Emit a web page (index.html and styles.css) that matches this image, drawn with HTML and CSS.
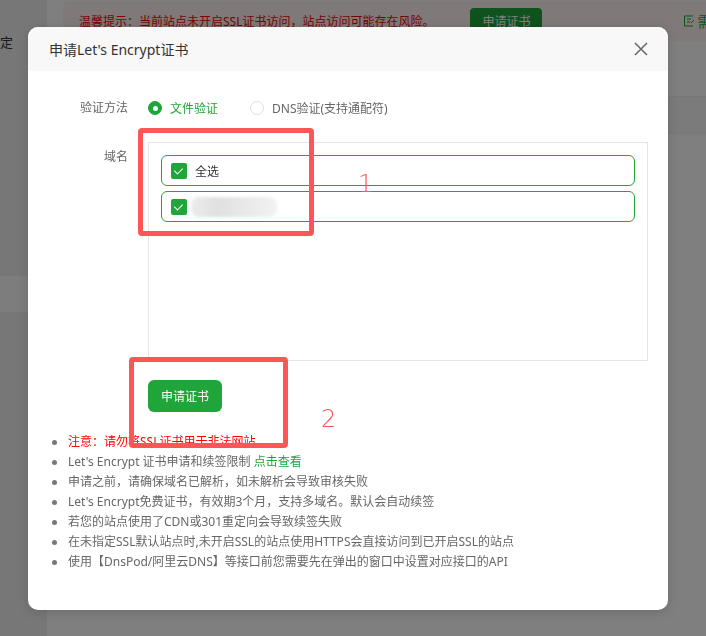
FILE: index.html
```html
<!DOCTYPE html>
<html lang="zh-CN">
<head>
  <meta charset="UTF-8" />
  <meta name="viewport" content="width=device-width,initial-scale=1.0"/>
  <title>申请Let's Encrypt证书</title>
  <link rel="stylesheet" href="styles.css">
</head>
<body>

<div class="app">
  <!-- page under the mask -->
  <aside class="sidebar">
    <div class="side-item">锁定</div>
    <div class="side-item side-active"></div>
  </aside>

  <main class="main">
    <div class="ssl-tip">
      <span class="tip-text">温馨提示：当前站点未开启SSL证书访问，站点访问可能存在风险。</span>
      <span class="tip-btn">申请证书</span>
      <span class="tip-link">
        <svg width="12" height="12" viewBox="0 0 12 12"><path d="M10 1H1.5v10H10M4 4h4M4 7h3M8 8l3-3" fill="none" stroke="currentColor" stroke-width="1"/></svg>需要
      </span>
    </div>
    <div class="tabs"></div>
    <div class="table-head"></div>
    <div class="table-row"></div>
  </main>
</div>

<div class="mask"></div>

<div class="modal">
  <div class="modal-header">
    <h3>申请Let's Encrypt证书</h3>
    <svg class="close" width="14" height="14" viewBox="0 0 14 14"><path d="M1 1l12 12M13 1L1 13" stroke="#666" stroke-width="1.5"/></svg>
  </div>

  <div class="modal-body">
    <div class="form-row">
      <label class="form-label">验证方法</label>
      <div class="form-control radios">
        <span class="radio checked"><i></i>文件验证</span>
        <span class="radio"><i></i>DNS验证(支持通配符)</span>
      </div>
    </div>

    <div class="form-row">
      <label class="form-label">域名</label>
      <div class="form-control">
        <div class="domain-box">
          <div class="domain-item"><span class="check"></span>全选</div>
          <div class="domain-item"><span class="check"></span><span class="blurred"></span></div>
        </div>
      </div>
    </div>

    <div class="btn-row">
      <button class="apply-btn">申请证书</button>
    </div>

    <ul class="help-list">
      <li class="warn">注意：请勿将SSL证书用于非法网站</li>
      <li>Let's Encrypt 证书申请和续签限制 <a href="#">点击查看</a></li>
      <li>申请之前，请确保域名已解析，如未解析会导致审核失败</li>
      <li>Let's Encrypt免费证书，有效期3个月，支持多域名。默认会自动续签</li>
      <li>若您的站点使用了CDN或301重定向会导致续签失败</li>
      <li>在未指定SSL默认站点时,未开启SSL的站点使用HTTPS会直接访问到已开启SSL的站点</li>
      <li>使用【DnsPod/阿里云DNS】等接口前您需要先在弹出的窗口中设置对应接口的API</li>
    </ul>
  </div>

  <!-- screenshot annotations -->
  <div class="mark mark-1"></div>
  <span class="mark-num num-1">1</span>
  <div class="mark mark-2"></div>
  <span class="mark-num num-2">2</span>
</div>

</body>
</html>
```

FILE: styles.css
```css
* {
  margin: 0;
  padding: 0;
  box-sizing: border-box;
}
body {
  font-family: "Noto Sans", "Noto Sans CJK SC", sans-serif;
  font-size: 12px;
  width: 706px;
  height: 636px;
  overflow: hidden;
  background: #fff;
  color: #666;
}
a {
  color: #20a53a;
  text-decoration: none;
}

/* page behind the dialog */
.app {
  display: flex;
  height: 636px;
}
.sidebar {
  width: 47px;
  background: #eee;
  padding-top: 28px;
  overflow: hidden;
}
.side-item {
  height: 28px;
  line-height: 28px;
  font-size: 13px;
  color: #333;
  margin-left: -13px;
  white-space: nowrap;
}
.side-active {
  margin-top: 220px;
  height: 36px;
  margin-left: 0;
  background: #fafafa;
}
.main {
  flex: 1;
  background: #fff;
  padding: 1px 0 0 16px;
  overflow: hidden;
}
.ssl-tip {
  display: flex;
  align-items: center;
  height: 40px;
  background: #fff2f2;
  border-radius: 6px 0 0 6px;
  padding-left: 16px;
  white-space: nowrap;
}
.tip-text {
  color: #ef0808;
  font-size: 12px;
}
.tip-btn {
  margin-left: 36px;
  background: #20a53a;
  color: #fff;
  font-size: 12px;
  padding: 0 12px;
  line-height: 27px;
  border-radius: 4px;
}
.tip-link {
  display: flex;
  align-items: center;
  gap: 2px;
  margin-left: 141px;
  color: #20a53a;
  font-size: 14px;
}
.tabs {
  height: 56px;
  border-bottom: 1px solid #eee;
}
.table-head {
  height: 37px;
  background: #f7f7f7;
  border-bottom: 1px solid #eee;
}
.table-row {
  height: 40px;
}

.mask {
  position: fixed;
  inset: 0;
  background: rgba(0, 0, 0, 0.5);
}

/* dialog */
.modal {
  position: absolute;
  left: 28px;
  top: 27px;
  width: 640px;
  background: #fff;
  border-radius: 10px;
  overflow: hidden;
  box-shadow: 0 2px 12px rgba(0, 0, 0, 0.15);
}
.modal-header {
  height: 44px;
  background: #f8f8f8;
  display: flex;
  align-items: center;
  justify-content: space-between;
  padding: 0 20px 0 21px;
}
.modal-header h3 {
  font-size: 14px;
  font-weight: normal;
  color: #333;
}
.modal-body {
  padding: 22px 20px 38px 0;
}
.form-row {
  display: flex;
  margin-bottom: 19px;
}
.form-label {
  width: 120px;
  padding-right: 20px;
  text-align: right;
  line-height: 30px;
  color: #666;
}
.form-control {
  flex: 1;
}
.radios {
  display: flex;
  align-items: center;
  gap: 32px;
  height: 30px;
}
.radio {
  display: flex;
  align-items: center;
  gap: 8px;
  color: #666;
}
.radio i {
  width: 14px;
  height: 14px;
  border-radius: 50%;
  border: 1px solid #dcdfe6;
  background: #fff;
  display: flex;
  align-items: center;
  justify-content: center;
}
.radio.checked {
  color: #20a53a;
}
.radio.checked i {
  border-color: #20a53a;
  background: #20a53a;
}
.radio.checked i::after {
  content: "";
  width: 5px;
  height: 5px;
  border-radius: 50%;
  background: #fff;
}
.domain-box {
  height: 219px;
  border: 1px solid #e6e6e6;
  padding: 12px;
  display: flex;
  flex-direction: column;
  gap: 5px;
}
.domain-item {
  height: 31px;
  border: 1px solid #20a53a;
  border-radius: 6px;
  display: flex;
  align-items: center;
  gap: 8px;
  padding-left: 9px;
  color: #333;
}
.check {
  width: 16px;
  height: 16px;
  background: #20a53a;
  border-radius: 2px;
  position: relative;
}
.check::after {
  content: "";
  position: absolute;
  left: 5px;
  top: 3px;
  width: 4px;
  height: 7px;
  border: solid #fff;
  border-width: 0 1.5px 1.5px 0;
  transform: rotate(45deg);
}
.blurred {
  width: 86px;
  height: 20px;
  margin-left: -4px;
  border-radius: 8px;
  background: linear-gradient(90deg, #ececec, #e0e0e0 30%, #e8e8e8 60%, #f2f2f2);
  filter: blur(1.5px);
}
.btn-row {
  padding-left: 120px;
  margin-bottom: 20px;
}
.apply-btn {
  height: 32px;
  padding: 0 13px;
  border: none;
  border-radius: 6px;
  background: #20a53a;
  color: #fff;
  font-family: inherit;
  font-size: 12px;
}
.help-list {
  list-style: none;
  padding-left: 40px;
}
.help-list li {
  position: relative;
  line-height: 20px;
  color: #666;
  white-space: nowrap;
}
.help-list li::before {
  content: "";
  position: absolute;
  left: -16px;
  top: 8px;
  width: 5px;
  height: 5px;
  border-radius: 50%;
  background: #777;
}
.help-list li.warn {
  color: #f00;
}

/* red annotation frames */
.mark {
  position: absolute;
  border: 5px solid #fe5656;
  border-radius: 4px;
}
.mark-1 {
  left: 110px;
  top: 101px;
  width: 176px;
  height: 108px;
}
.mark-2 {
  left: 101px;
  top: 330px;
  width: 159px;
  height: 91px;
}
.mark-num {
  position: absolute;
  color: #fe5656;
  font-family: "DejaVu Sans", sans-serif;
  font-size: 24px;
  font-weight: 200;
  line-height: 1;
}
.num-1 {
  left: 330px;
  top: 145px;
}
.num-2 {
  left: 293px;
  top: 380px;
}
```
